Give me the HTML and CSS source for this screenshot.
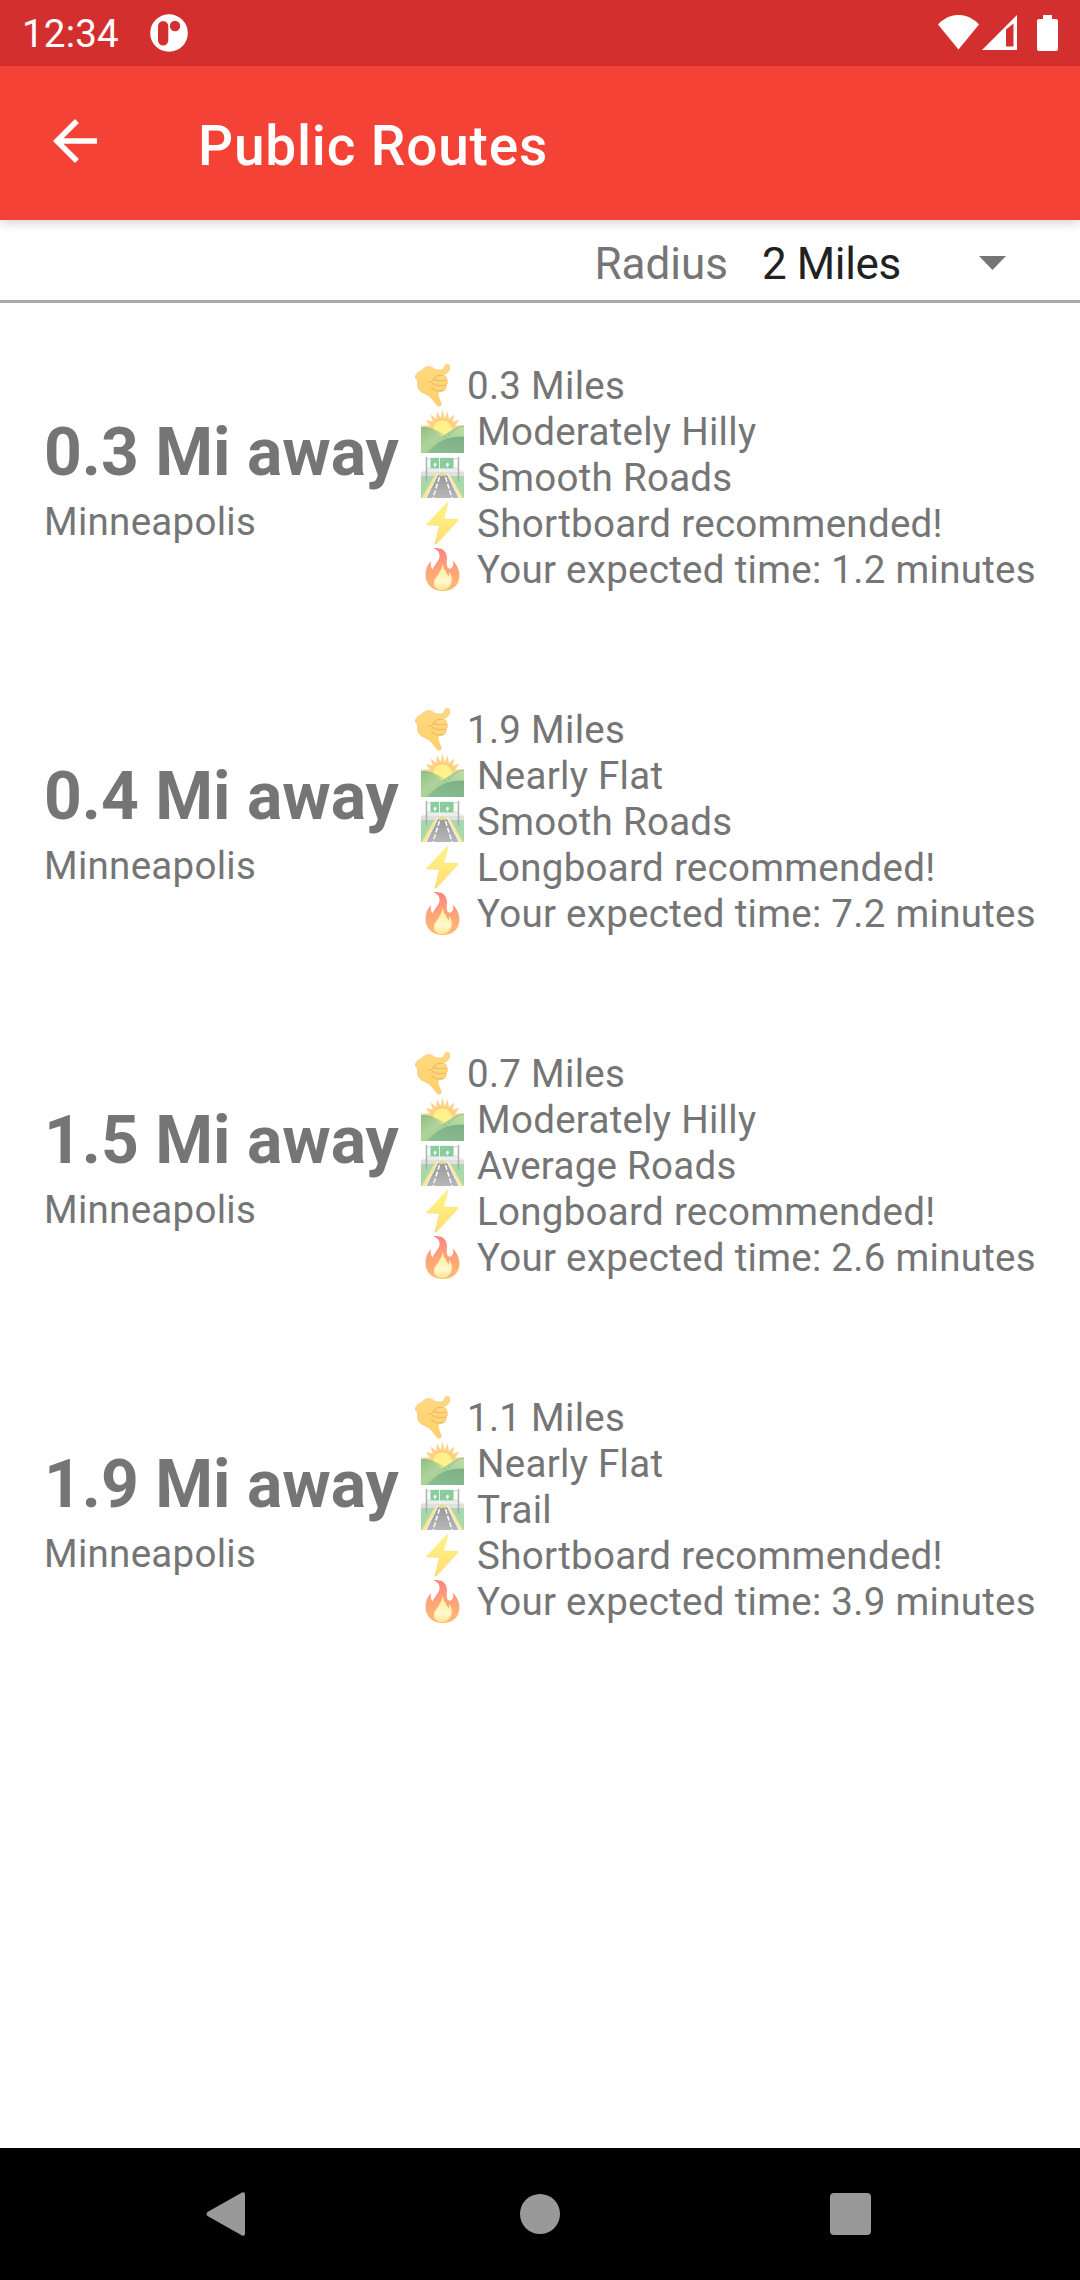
FILE: index.html
```html
<!DOCTYPE html>
<html lang="en">
<head>
<meta charset="utf-8">
<title>Public Routes</title>
<link rel="stylesheet" href="styles.css">
</head>
<body>
<svg class="defs" width="0" height="0" aria-hidden="true">
  <defs>
    <linearGradient id="handFill" x1="0" y1="0" x2="0" y2="1"><stop offset="0" stop-color="#ffda82"/><stop offset="1" stop-color="#ffd068"/></linearGradient>
    <linearGradient id="boltFill" x1="0" y1="0" x2="0" y2="1"><stop offset="0" stop-color="#fff67f"/><stop offset="1" stop-color="#ffdc79"/></linearGradient>
    <linearGradient id="flameFill" x1="0" y1="0" x2="0" y2="1"><stop offset="0" stop-color="#fc8581"/><stop offset=".35" stop-color="#ff9b7c"/><stop offset="1" stop-color="#ffbd6f"/></linearGradient>
    <linearGradient id="flameCore" x1="0" y1="0" x2="0" y2="1"><stop offset="0" stop-color="#ffee96"/><stop offset=".7" stop-color="#fff8cc"/><stop offset="1" stop-color="#ffe590"/></linearGradient>
    <linearGradient id="hillBack" x1="0" y1="1" x2="1" y2="0"><stop offset="0" stop-color="#91c78a"/><stop offset="1" stop-color="#bfdfa6"/></linearGradient>
    <linearGradient id="hillLeft" x1="0" y1="0" x2="1" y2="1"><stop offset="0" stop-color="#8fbf82"/><stop offset=".45" stop-color="#b0d49a"/><stop offset="1" stop-color="#86b987"/></linearGradient>
    <linearGradient id="hillFront" x1="0" y1="1" x2="1" y2="0"><stop offset="0" stop-color="#8abf93"/><stop offset="1" stop-color="#7fae86"/></linearGradient>
    <linearGradient id="asphalt" x1="0" y1="0" x2="0" y2="1"><stop offset="0" stop-color="#999"/><stop offset="1" stop-color="#b7b7b7"/></linearGradient>
    <symbol id="shaka" viewBox="0 0 43 43">
      <path d="M.5 12C2 8 5 7.500 7 6C9 4 10 3 12 2.700C14 2 15.500 3 17.500 3.500C19 5 20.500 6 22.500 6C25 6 27 6.500 28.500 5C29.500 3.500 29 1 31.500 .5C34 0 35.200 1.500 34.700 3.500C34.700 6 34 7.500 32 9C30.500 10 29.500 10 28.500 11.500C30.500 12 32.500 13 31.800 16C33.500 17.500 32.800 20 31 21C31.500 24 30.500 26.500 28 27C27 28 24.500 27.500 23 28.500C22.500 32 24.500 35 25.500 38C26.800 41 25.500 43.500 22.500 41.500C19 38 17 34 13.500 31.500C9 29.500 4 27.500 2.800 23C2.200 20 3.500 18 2 15.500C.800 14.500 0 13.500 .5 12Z" fill="url(#handFill)" stroke="#f5c678" stroke-width=".7"/>
      <path d="M13 17.500C16 19 18 17 19 14C21.500 11 25 11 28.500 11.500M19.500 15.500C22 17.500 28 16.500 31.500 16.500M17.500 19.500C21 22.500 27 21.500 31 21M16.500 22.500C18 27 23 27.500 28 26.500" fill="none" stroke="#edba6a" stroke-width="1.100" stroke-linecap="round"/>
    </symbol>
    <symbol id="hills" viewBox="0 0 43 43">
      <path d="M21.500 0L23.500 8L27 1.200L27.700 9L33.500 4.500L31.500 11.500L38.500 10L34 15.500L43 15.500L35.500 20L40 24H3L8 20L0 15.500L9 15.500L4.500 10L11.500 11.500L9.500 4.500L15.300 9L16 1.200L19.500 8Z" fill="#ffd387"/>
      <circle cx="21.500" cy="20" r="10.500" fill="#fff08c" stroke="#ffcb79" stroke-width="1.300"/>
      <path d="M15 30C24 26 31 17 43 15.500V43H15Z" fill="url(#hillBack)"/>
      <path d="M0 17C15 17 26 29 34 43H0Z" fill="url(#hillLeft)"/>
      <path d="M7 43C16 32 28 26 43 27V43Z" fill="url(#hillFront)"/>
      <path d="M0 17C14 18 22 24 28 31M27 26C33 19 38 16.500 43 16M7 43C16 32 28 26 43 27" fill="none" stroke="#71a277" stroke-width=".5"/>
    </symbol>
    <symbol id="road" viewBox="0 0 43 43">
      <path d="M0 17C2 13 5 16 7 13H38C40 15 42 13 43 16V21H0Z" fill="#ededed"/>
      <path d="M0 19H43V42H0Z" fill="#a8d9ac"/>
      <path d="M0 16H43V20H0Z" fill="#e0e0e0"/>
      <path d="M15 18H28L41.500 42H1.500Z" fill="#efefef"/>
      <path d="M14 19L16 19L3.500 42H.5ZM27.500 19H29L42.500 42H40Z" fill="#ffe37d"/>
      <path d="M17 19H26L37.500 42H5.500Z" fill="url(#asphalt)"/>
      <path d="M18.500 21L12 42M24.500 21L31 42" stroke="#fff" stroke-width="1.500" stroke-dasharray="5 2" fill="none"/>
      <path d="M18 18Q21.500 15 25 18V20H18Z" fill="#e5d990"/>
      <path d="M5.500 1V26M37.500 1V26" stroke="#adadad" stroke-width="1.500"/>
      <path d="M5 3H38M5 12H38" stroke="#cacaca" stroke-width="1"/>
      <path d="M9 1.500H33V13H9Z" fill="#8bcba0" stroke="#eef7ef"/>
      <path d="M18.500 2V13" stroke="#eef7ef" stroke-width="1"/>
      <circle cx="14" cy="8.500" r="1.500" fill="#fff"/><circle cx="26.500" cy="8.500" r="1.500" fill="#fff"/>
      <path d="M14 9V11M26.500 9V11" stroke="#fff"/>
    </symbol>
    <symbol id="bolt" viewBox="0 0 43 43">
      <path d="M26 .7L6 22Q5.200 23 6.500 23L18.500 23.500L13.800 41.500Q14 43 15.500 42L37 18.500Q37.500 17.300 36.500 17.300L22.500 17L27 1.500Q27 0 26 .7Z" fill="url(#boltFill)" stroke="#f8dd76" stroke-width=".5"/>
    </symbol>
    <symbol id="flame" viewBox="0 0 43 43">
      <path d="M13 .8C12 .3 13 0 15 0C23 0 26 5 26 10C26 14 25 17 27 20C30 22 33 19 32 13C36 16 38.500 23 38.500 28C38 38 31 43 21.500 43C11 43 4.500 36 4.500 27C4.500 21 7 16 10 13C9 17 10 20 12 21C13 17 18 13 18.500 9C19 5 17 2 13 .8Z" fill="url(#flameFill)"/>
      <path d="M22 15.500C22 21 25 23 26 26L28 29L28 24C31 28 31.500 32 30 36C28 40 25 42 21 42C16 42 13 39 13 35C13 31 16 29 18 25C20 22 21 19 22 15.500Z" fill="url(#flameCore)"/>
    </symbol>
  </defs>
</svg>

<div class="screen">
  <header class="status-bar">
    <span class="clock">12:34</span>
    <svg class="app-badge" width="38" height="38" viewBox="0 0 38 38">
      <circle cx="19" cy="19" r="18.800" fill="#fff"/>
      <rect x="8" y="7" width="10.300" height="24.500" rx="5.150" fill="#d32f2f"/>
      <circle cx="25" cy="12" r="5.200" fill="#d32f2f"/>
    </svg>
    <div class="indicators">
      <svg width="41" height="35" viewBox="0 0 41 35"><path d="M0 9.500C12-3.200 29-3.200 41 9.500L20.500 34.500Z" fill="#fff"/></svg>
      <svg class="signal" width="35" height="35" viewBox="0 0 35 35"><path fill-rule="evenodd" d="M0 35L35 0V35ZM24 14.500V31.500H31.500V8.500Z" fill="#fff"/></svg>
      <svg class="battery" width="21" height="36" viewBox="0 0 21 36"><path d="M6 0H15V4H19Q21 4 21 6V34Q21 36 19 36H2Q0 36 0 34V6Q0 4 2 4H6Z" fill="#fff"/></svg>
    </div>
  </header>
  <nav class="app-bar">
    <svg class="back" width="44" height="44" viewBox="0 0 16 16"><path d="M16 7H3.830L9.420 1.410L8 0L0 8L8 16L9.410 14.590L3.830 9H16Z" fill="#fff"/></svg>
    <h1 class="app-title">Public Routes</h1>
  </nav>
  <div class="filter">
    <span class="filter-label">Radius</span>
    <span class="filter-value">2 Miles</span>
    <svg class="caret" width="27" height="14" viewBox="0 0 27 14"><path d="M0 0H27L13.500 14Z" fill="#757575"/></svg>
  </div>
  <main class="routes">
    <article class="route">
      <div class="place"><h2 class="distance">0.3 Mi away</h2><p class="city">Minneapolis</p></div>
      <ul class="facts">
        <li class="fact first"><svg class="emoji"><use href="#shaka"/></svg><span>0.3 Miles</span></li>
        <li class="fact"><svg class="emoji"><use href="#hills"/></svg><span>Moderately Hilly</span></li>
        <li class="fact"><svg class="emoji"><use href="#road"/></svg><span>Smooth Roads</span></li>
        <li class="fact"><svg class="emoji"><use href="#bolt"/></svg><span>Shortboard recommended!</span></li>
        <li class="fact"><svg class="emoji"><use href="#flame"/></svg><span>Your expected time: 1.2 minutes</span></li>
      </ul>
    </article>
    <article class="route">
      <div class="place"><h2 class="distance">0.4 Mi away</h2><p class="city">Minneapolis</p></div>
      <ul class="facts">
        <li class="fact first"><svg class="emoji"><use href="#shaka"/></svg><span>1.9 Miles</span></li>
        <li class="fact"><svg class="emoji"><use href="#hills"/></svg><span>Nearly Flat</span></li>
        <li class="fact"><svg class="emoji"><use href="#road"/></svg><span>Smooth Roads</span></li>
        <li class="fact"><svg class="emoji"><use href="#bolt"/></svg><span>Longboard recommended!</span></li>
        <li class="fact"><svg class="emoji"><use href="#flame"/></svg><span>Your expected time: 7.2 minutes</span></li>
      </ul>
    </article>
    <article class="route">
      <div class="place"><h2 class="distance">1.5 Mi away</h2><p class="city">Minneapolis</p></div>
      <ul class="facts">
        <li class="fact first"><svg class="emoji"><use href="#shaka"/></svg><span>0.7 Miles</span></li>
        <li class="fact"><svg class="emoji"><use href="#hills"/></svg><span>Moderately Hilly</span></li>
        <li class="fact"><svg class="emoji"><use href="#road"/></svg><span>Average Roads</span></li>
        <li class="fact"><svg class="emoji"><use href="#bolt"/></svg><span>Longboard recommended!</span></li>
        <li class="fact"><svg class="emoji"><use href="#flame"/></svg><span>Your expected time: 2.6 minutes</span></li>
      </ul>
    </article>
    <article class="route">
      <div class="place"><h2 class="distance">1.9 Mi away</h2><p class="city">Minneapolis</p></div>
      <ul class="facts">
        <li class="fact first"><svg class="emoji"><use href="#shaka"/></svg><span>1.1 Miles</span></li>
        <li class="fact"><svg class="emoji"><use href="#hills"/></svg><span>Nearly Flat</span></li>
        <li class="fact"><svg class="emoji"><use href="#road"/></svg><span>Trail</span></li>
        <li class="fact"><svg class="emoji"><use href="#bolt"/></svg><span>Shortboard recommended!</span></li>
        <li class="fact"><svg class="emoji"><use href="#flame"/></svg><span>Your expected time: 3.9 minutes</span></li>
      </ul>
    </article>
  </main>
  <footer class="nav-bar">
    <svg width="40" height="46" viewBox="0 0 40 46"><path d="M36 1.500L1.500 21Q-.5 23 1.500 25L36 44.500Q39 45.500 39 42.500V3.500Q39 .5 36 1.500Z" fill="#999"/></svg>
    <svg class="home" width="40" height="40" viewBox="0 0 40 40"><circle cx="20" cy="20" r="20" fill="#999"/></svg>
    <svg width="41" height="42" viewBox="0 0 41 42"><rect width="41" height="42" rx="4" fill="#999"/></svg>
  </footer>
</div>
</body>
</html>
```
FILE: styles.css
```css
* { box-sizing: border-box; }
body { margin: 0; background: #fff; font-family: Roboto, sans-serif; }
h1, h2, p, ul { margin: 0; padding: 0; }
svg { display: block; flex: none; }
.defs { position: absolute; }
.screen { width: 1080px; height: 2280px; display: flex; flex-direction: column; color: #757575; overflow: hidden; }

.status-bar { height: 66px; flex: none; background: #d32f2f; color: #fff; display: flex; align-items: center; padding: 0 22px; z-index: 1; }
.clock { font-size: 38.5px; line-height: 46px; padding-top: 2px; width: 127.5px; letter-spacing: .2px; }
.indicators { margin-left: auto; display: flex; align-items: flex-start; }
.signal { margin-left: 3px; }
.battery { margin-left: 20px; }

.app-bar { height: 154px; flex: none; background: #f44336; color: #fff; display: flex; align-items: center; padding-left: 53px; box-shadow: 0 2px 12px rgba(0, 0, 0, .2); }
.back { margin-top: -4px; }
.app-title { font-size: 55px; font-weight: 500; line-height: 64px; margin: 5px 0 0 101px; letter-spacing: .0148em; }

.filter { height: 83px; flex: none; border-bottom: 3px solid #aaa; display: flex; align-items: center; justify-content: flex-end; font-size: 44px; line-height: 52px; padding: 7px 74px 0 0; }
.filter-label { margin-right: 34px; }
.filter-value { color: #212121; width: 217px; letter-spacing: -.4px; }
.caret { margin-top: -2px; }

.routes { flex: 1; }
.route { height: 344px; display: flex; justify-content: space-between; align-items: center; padding: 6px 44px 0; white-space: nowrap; }
.place { padding-top: 3px; }
.distance { font-size: 66px; font-weight: 700; line-height: 77px; }
.city { font-size: 38.5px; line-height: 46px; margin-top: 8px; letter-spacing: .0074em; }
.facts { list-style: none; width: 626px; font-size: 38.5px; letter-spacing: .0074em; }
.fact { height: 46px; line-height: 46px; display: flex; padding-left: 11px; }
.fact.first { padding-left: 5px; }
.first .emoji { margin-right: 9px; width: 43px; }
.emoji { width: 43px; height: 43px; margin-top: 1px; margin-right: 13px; }

.nav-bar { height: 132px; flex: none; background: #000; display: flex; align-items: center; justify-content: space-between; padding: 0 209px 0 206px; }
.home { margin-left: 3px; }
```
